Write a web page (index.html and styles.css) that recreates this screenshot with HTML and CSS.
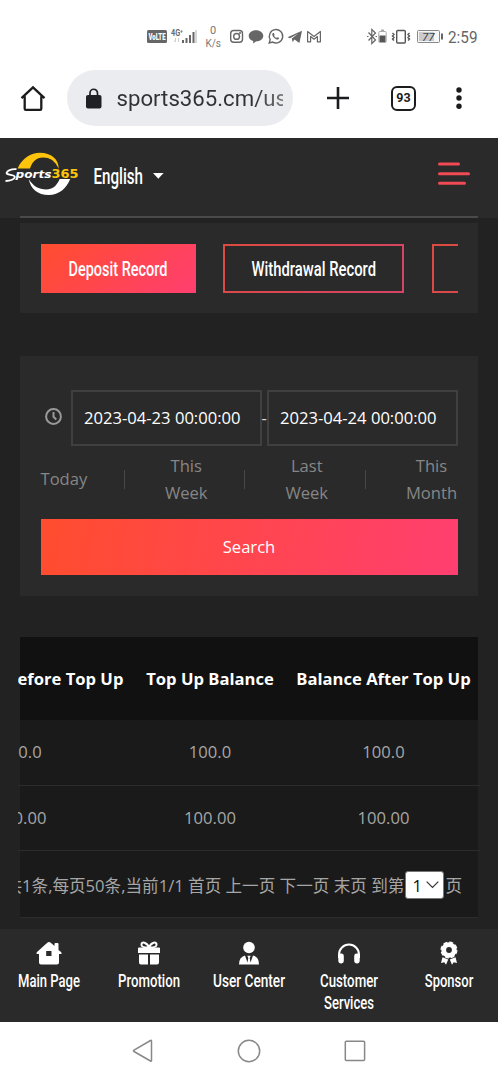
FILE: index.html
```html
<!DOCTYPE html>
<html lang="en">
<head>
<meta charset="utf-8">
<meta name="viewport" content="width=device-width">
<title>Sports365</title>
<link rel="stylesheet" href="styles.css">
</head>
<body>
<div class="status">
  <svg class="status-icons" width="190" height="32" viewBox="140 20 190 32">
    <rect x="147" y="30" width="20" height="13" rx="1.500" fill="#666"/>
    <text x="148.500" y="40" class="volte" textLength="17" lengthAdjust="spacingAndGlyphs">VoLTE</text>
    <text x="171" y="36" class="net" textLength="12" lengthAdjust="spacingAndGlyphs">4G⁺</text>
    <path d="M175.500 38v4M174 40.500l1.500 1.500M178.500 42v-4" stroke="#ccc" fill="none"/>
    <path d="M183 43v-3M186.500 43v-5M190 43v-8M193.500 43v-11" stroke="#666" stroke-width="2"/>
    <path d="M196 43V30" stroke="#ccc" stroke-width="1.500"/>
    <text x="213" y="33.500" class="speed" text-anchor="middle">0</text>
    <text x="205.500" y="46.500" class="speed" textLength="15.500" lengthAdjust="spacingAndGlyphs">K/s</text>
    <g fill="none" stroke="#666" stroke-width="1.400">
      <rect x="230.700" y="30.500" width="11.800" height="11.800" rx="3"/>
      <circle cx="236.600" cy="36.400" r="2.900"/>
      <circle cx="240" cy="33" r=".4"/>
      <path d="M269.200 43l1-3.400a6.700 6.700 0 1 1 2.500 2.500z"/>
    </g>
    <path d="M256 30.200c4.200 0 7.300 2.500 7.300 5.600s-3.100 5.600-7.300 5.600l-2.800 2v-2.400c-2.800-.8-4.500-2.800-4.500-5.200 0-3.100 3.100-5.600 7.300-5.600z" fill="#666"/>
    <path d="M272.500 33.500c.8-1 1.600-.3 2 .8.200.8-.8 1.100 0 2.100.9 1.100 1.500 1.600 2.300 1.400.8-.8 1.100-.9 2.300.1-.5 2.700-3.200 1.800-5-.1-1.500-1.500-2.300-3-1.600-4.300z" fill="#666"/>
    <path d="M287.500 37.300l14.500-6.600-2.600 12.300-4.900-3.400-1.900 2.300-.8-3.400 6.500-5-8.300 4.800z" fill="#666"/>
    <path d="M307.600 41.800V31.500l6.400 5 6.400-5v10.300h-3V36.500L314 39.200l-3.400-2.700v5.300z" fill="none" stroke="#666" stroke-width="1.200" stroke-linejoin="round"/>
  </svg>
  <svg class="status-icons" width="120" height="32" viewBox="363 20 120 32">
    <path d="M368.500 32.500l7 7.500-3.700 3.500v-14l3.700 3.500-7 7.500M367 36.500h1.500M375.500 36.500h1.500" fill="none" stroke="#666" stroke-width="1.200"/>
    <path d="M381 29.500h3v2h-3z" fill="#aaa"/><rect x="378.800" y="31.500" width="7.400" height="11" rx="1" fill="#fff" stroke="#aaa"/><path d="M379.500 35.500h6v6.500h-6z" fill="#555"/>
    <rect x="396.700" y="30.500" width="8.600" height="12.500" rx="1" fill="none" stroke="#555" stroke-width="1.400"/>
    <path d="M392.500 33l1.500 1.500-1.500 1.500 1.500 1.500-1.500 1.500 1.500 1.500M409.500 33L408 34.500l1.500 1.500-1.500 1.500 1.500 1.500-1.500 1.500" fill="none" stroke="#555" stroke-width="1.400"/>
    <rect x="417.500" y="30.500" width="22" height="12" rx="1" fill="#f6f6f6" stroke="#888"/><path d="M419 32h15v9h-15z" fill="#ccc"/><path d="M442 33.500v6" stroke="#666" stroke-width="2"/>
    <text x="422" y="41" class="battery" textLength="12.500" lengthAdjust="spacingAndGlyphs">77</text>
    <text x="448" y="42.500" class="clock" textLength="29.500" lengthAdjust="spacingAndGlyphs">2:59</text>
  </svg>
</div>

<div class="browser">
  <svg class="home" width="26" height="27" viewBox="0 0 26 27"><path d="M1.500 13.200L13 2.300l11.500 10.900M4.700 11.300v12.400q0 1.200 1.200 1.200h14.200q1.200 0 1.200-1.200V11.300" fill="none" stroke="#1b1c1e" stroke-width="2.300"/></svg>
  <div class="url">
    <svg width="16" height="21" viewBox="0 0 16 21"><rect y="7" width="15.500" height="13.500" rx="2" fill="#202124"/><path d="M4 8V5a3.700 3.700 0 0 1 7.500 0v3" fill="none" stroke="#202124" stroke-width="1.700"/></svg>
    <span class="address">sports365.cm/us</span>
  </div>
  <svg class="plus" width="22" height="22" viewBox="0 0 22 22"><path d="M11 0v22M0 11h22" stroke="#1b1c1e" stroke-width="2.600"/></svg>
  <div class="tabs">93</div>
  <svg class="more" width="6" height="22" viewBox="0 0 6 22"><circle cx="3" cy="3" r="2.700"/><circle cx="3" cy="11" r="2.700"/><circle cx="3" cy="19.200" r="2.700"/></svg>
</div>

<main class="page">
  <header class="header">
    <svg width="170" height="50" viewBox="0 147 170 50">
      <path d="M17.600 168.500C22 158 31 152.700 40 152.700c11 0 19 6.300 18.700 16.300C55 160.500 50 157.500 43 157.500c-7 0-10.500 4-13 11z" fill="#fdc40b"/>
      <path d="M28.700 179c2 10 9 16 20 16 10.500 0 18-7 21.500-16h-10.500c-3 7-7.500 10.500-13.400 10.500-7.500 0-13.300-3.500-17.600-10.500z" fill="#fff"/>
      <path d="M16.500 169.200C11 168.700 7 171 6.600 173c-.3 2.400 8.400 1.200 8.200 4-.2 2-4 3.900-9.300 4" fill="none" stroke="#fff" stroke-width="1.800"/>
      <text x="15.500" y="178" class="logo-white" textLength="36" lengthAdjust="spacingAndGlyphs">ports</text>
      <text x="51.500" y="178.300" class="logo-gold" textLength="27" lengthAdjust="spacingAndGlyphs">365</text>
      <text x="93.500" y="183.500" class="cond lang" textLength="49.500" lengthAdjust="spacingAndGlyphs">English</text>
      <path d="M153 173h10.600l-5.300 5.700z" fill="#fff"/>
    </svg>
    <svg class="menu" width="32" height="24" viewBox="0 0 32 24"><path d="M1.500 2h19M1.500 11.700h29M1.500 21.300h25" stroke="#f04a55" stroke-width="3" stroke-linecap="round"/></svg>
  </header>

  <section class="card record-tabs">
    <div class="tab-strip">
      <a class="tab active"><svg width="101" height="28" viewBox="0 0 101 28"><text x=".5" y="20.700" class="cond tab-text" textLength="99" lengthAdjust="spacingAndGlyphs">Deposit Record</text></svg></a>
      <a class="tab wide"><svg width="126" height="28" viewBox="0 0 126 28"><text x=".5" y="20.700" class="cond tab-text" textLength="124.500" lengthAdjust="spacingAndGlyphs">Withdrawal Record</text></svg></a>
      <a class="tab wide"></a>
    </div>
  </section>

  <section class="card filter">
    <div class="dates">
      <svg class="time" width="17" height="17" viewBox="0 0 17 17"><circle cx="8.500" cy="8.500" r="7.400"/><path d="M8.500 4v4.800l2.800 2.700"/></svg>
      <div class="field">2023-04-23 00:00:00</div>
      <span class="dash">-</span>
      <div class="field">2023-04-24 00:00:00</div>
    </div>
    <div class="quick">
      <span class="today">Today</span><i></i><span class="week">This Week</span><i></i><span class="week">Last Week</span><i></i><span class="month">This Month</span>
    </div>
    <div class="search">Search</div>
  </section>

  <section class="records">
    <div class="row head"><b>Balance Before Top Up</b><b>Top Up Balance</b><b>Balance After Top Up</b></div>
    <div class="row"><span>0.0</span><span>100.0</span><span>100.0</span></div>
    <div class="row"><span>0.00</span><span>100.00</span><span>100.00</span></div>
    <div class="pager" lang="zh-CN">共1条,每页50条,当前1/1 首页 上一页 下一页 末页 到第<span class="select">1<svg width="13" height="8" viewBox="0 0 13 8"><path d="M.7.7L6.500 6.500 12.300.7" fill="none" stroke="#333" stroke-width="1.200"/></svg></span>页</div>
  </section>
</main>

<nav class="bottom">
  <a class="item">
    <svg width="26" height="24" viewBox="0 0 26 24"><path fill-rule="evenodd" d="M13 1q1 0 2 1l3.500 3V3q0-1 1-1h2q1 0 1 1v6l2.500 2q1 1 .4 2H23v8.500q0 2-2 2H5q-2 0-2-2V13H.8q-.8-1 .2-2l10-9q1-1 2-1zM10.200 10v5h5.300v-5z"/></svg>
    <svg width="100" height="22"><text x="50" y="16" class="cond nav-text" text-anchor="middle" textLength="62" lengthAdjust="spacingAndGlyphs">Main Page</text></svg>
  </a>
  <a class="item">
    <svg width="24" height="24" viewBox="0 0 24 24"><path d="M12 6.500C10 1 4 0 4.500 4c.2 2 2 2.700 7.500 2.500C14 1 20 0 19.500 4c-.2 2-2 2.700-7.500 2.500z" fill="none" stroke="#fff" stroke-width="2"/><path d="M2 6.500h20q1 0 1 1V12H1V7.500q0-1 1-1zM2 13.500h9v10H4q-2 0-2-2zM13 13.500h9v8q0 2-2 2h-7z"/></svg>
    <svg width="100" height="22"><text x="50" y="16" class="cond nav-text" text-anchor="middle" textLength="62" lengthAdjust="spacingAndGlyphs">Promotion</text></svg>
  </a>
  <a class="item">
    <svg width="24" height="24" viewBox="0 0 24 24"><circle cx="12" cy="6.500" r="5.800"/><path d="M2 23.500q0-7.500 6-9l2.500 7 .8-4.500-1-2.300h3.400l-1 2.300.8 4.500 2.500-7q6 1.500 6 9z"/></svg>
    <svg width="100" height="22"><text x="50" y="16" class="cond nav-text" text-anchor="middle" textLength="72" lengthAdjust="spacingAndGlyphs">User Center</text></svg>
  </a>
  <a class="item">
    <svg width="24" height="24" viewBox="0 0 24 24"><path d="M2 17v-3.500a10 10 0 0 1 20 0V17" fill="none" stroke="#fff" stroke-width="2"/><rect x="1.300" y="12.500" width="5.500" height="10" rx="2.400"/><rect x="17.200" y="12.500" width="5.500" height="10" rx="2.400"/></svg>
    <svg width="100" height="44"><text x="50" y="16" class="cond nav-text" text-anchor="middle" textLength="58" lengthAdjust="spacingAndGlyphs">Customer</text><text x="50" y="37.500" class="cond nav-text" text-anchor="middle" textLength="50" lengthAdjust="spacingAndGlyphs">Services</text></svg>
  </a>
  <a class="item">
    <svg width="24" height="24" viewBox="0 0 24 24"><circle cx="12" cy="9" r="5.300" fill="none" stroke="#fff" stroke-width="4.800"/><circle cx="12" cy="9" r="7.900" fill="none" stroke="#fff" stroke-width="1.200" stroke-dasharray="4.200 2"/><path d="M5.500 16.200l5.700 2.300-2.200 5.200-1.700-2.400-3.300.7zM18.500 16.200l-5.700 2.300 2.200 5.200 1.700-2.400 3.300.7z"/></svg>
    <svg width="100" height="22"><text x="50" y="16" class="cond nav-text" text-anchor="middle" textLength="48.500" lengthAdjust="spacingAndGlyphs">Sponsor</text></svg>
  </a>
</nav>

<footer class="system">
  <svg width="24" height="26" viewBox="0 0 24 26"><path d="M20.500 3v19.500q0 1-1 .5L3 13.500q-1-.7 0-1.400L19.500 2.500q1-.5 1 .5z"/></svg>
  <svg width="24" height="26" viewBox="0 0 24 26"><circle cx="12" cy="13" r="10.700"/></svg>
  <svg width="24" height="26" viewBox="0 0 24 26"><rect x="2.300" y="3.300" width="19.300" height="19.300" rx="1"/></svg>
</footer>
</body>
</html>
```
FILE: styles.css
```css
* { box-sizing: border-box; }
body {
  margin: 0;
  width: 498px;
  height: 1080px;
  overflow: hidden;
  background: #fff;
  font-family: "Open Sans", "Noto Sans CJK SC", sans-serif;
  font-size: 16.6px;
  color: #a6a6a6;
}
svg { display: block; flex: none; overflow: visible; }

.status {
  display: flex;
  justify-content: space-between;
  height: 60px;
  padding: 20px 15px 0 140px;
}
.status-icons { font-family: Roboto, sans-serif; fill: #666; }
.volte { font-size: 9.5px; font-weight: 900; fill: #fff; }
.net { font-size: 9px; font-weight: 700; }
.speed { font-size: 11px; fill: #777; }
.battery { font-size: 11px; font-style: italic; fill: #444; }
.clock { font-size: 16.5px; fill: #666; }

.browser { display: flex; align-items: center; height: 78px; padding: 0 0 2px 20px; }
.home { margin-right: 21px; }
.url {
  display: flex;
  align-items: center;
  width: 226px;
  height: 56px;
  padding: 0 10px 0 19px;
  border-radius: 28px;
  background: #ebecef;
}
.address {
  width: 168px;
  margin-left: 14.500px;
  overflow: hidden;
  white-space: nowrap;
  font: 22.2px/30px Roboto, sans-serif;
  color: transparent;
  background: linear-gradient(90deg, #303134 82%, #777 100%);
  background-clip: text;
}
.plus { margin-left: 34px; }
.tabs {
  width: 25px;
  height: 25px;
  margin: 0 42px;
  border: 2.5px solid #1b1c1e;
  border-radius: 6px;
  font: 700 12.5px/20px Roboto, sans-serif;
  text-align: center;
  color: #1b1c1e;
}
.more { margin-left: -2px; fill: #1b1c1e; }

.page { height: 791px; background: #222; }
.header {
  display: flex;
  justify-content: space-between;
  height: 80px;
  padding: 9px 28.500px 0 0;
  background: linear-gradient(#4a4a4a, #4a4a4a) 20px 77.500px / 458px 2.500px no-repeat, #2a2a2a;
}
.menu { margin-top: 15px; }
.cond { font-family: Roboto, sans-serif; font-weight: 500; fill: #fff; }
.lang { font-size: 21.5px; }
.tab-text { font-size: 20px; }
.nav-text { font-size: 18.3px; }
.logo-white, .logo-gold { font-family: "DejaVu Sans", sans-serif; font-weight: 700; }
.logo-white { font-size: 11px; font-style: italic; fill: #fff; }
.logo-gold { font-size: 12px; fill: #fdc40b; }

.card { margin: 0 20px; background: #2a2a2a; }
.record-tabs { height: 90px; margin-top: 5px; padding: 21px 20.500px 0; }
.tab-strip { display: flex; gap: 27.500px; overflow: hidden; }
.tab {
  display: flex;
  flex: none;
  align-items: center;
  justify-content: center;
  width: 155px;
  height: 49px;
  border: 1.5px solid;
  border-image: linear-gradient(135deg, #dc4b40, #d54368) 1;
  border-width: 2px;
}
.tab.wide { width: 181px; }
.tab.active { border: 0; background: linear-gradient(135deg, #ff4d2e, #ff3f70); }

.filter { height: 240px; margin-top: 43px; padding: 34px 20.5px 0; }
.dates { display: flex; align-items: center; height: 56px; }
.time { margin: 0 9.500px 4px 4px; fill: none; stroke: #999; stroke-width: 2; }
.field {
  width: 190.500px;
  height: 56px;
  padding-left: 11px;
  border: 2px solid #404040;
  line-height: 51px;
  white-space: nowrap;
  color: #fff;
}
.dash { width: 5.500px; margin-bottom: 2px; color: #ddd; }
.quick { display: flex; align-items: center; height: 53px; margin-top: 7px; line-height: 26.500px; color: #868686; text-align: center; }
.quick i { flex: none; width: 1px; height: 19px; background: #484848; }
.today { flex: none; width: 83px; text-align: left; }
.week { flex: none; width: 119.500px; padding: 0 30px 0 34px; }
.month { flex: none; width: 52px; margin-left: auto; }
.search {
  height: 56px;
  margin-top: 13px;
  background: linear-gradient(100deg, #ff4d2e, #ff3f70);
  line-height: 56px;
  text-align: center;
  color: #fff;
}

.records {
  height: 281px;
  margin: 41px 20px 0;
  overflow: clip;
  overflow-clip-margin: 2px;
  background: linear-gradient(#111 83px, #1a1a1a 83px);
}
.row {
  display: grid;
  grid-template-columns: 210px 150px 197px;
  width: 557px;
  height: 65.500px;
  margin-left: -95px;
  border-bottom: 1px solid #2c2c2c;
  line-height: 64px;
  text-align: center;
}
.row.head { height: 83px; border: 0; line-height: 83px; color: #fff; white-space: nowrap; }
.pager {
  display: flex;
  align-items: center;
  justify-content: flex-end;
  height: 67px;
  padding: 2px 16px 0 0;
  border-bottom: 1px solid #2c2c2c;
  white-space: pre;
}
.select {
  display: flex;
  flex: none;
  align-items: center;
  justify-content: space-between;
  width: 39px;
  height: 28px;
  margin: 0 1px;
  padding: 0 4px 0 6px;
  border: 1px solid #777;
  border-radius: 3px;
  background: #fff;
  color: #111;
}

.bottom { display: flex; justify-content: center; height: 93px; padding-top: 12px; background: #2a2a2a; }
.item { display: flex; flex: none; flex-direction: column; align-items: center; gap: 6px; width: 100px; fill: #fff; }
.system { display: flex; justify-content: center; gap: 82px; height: 58px; padding-top: 16px; fill: none; stroke: #888; stroke-width: 1.5; }
```
